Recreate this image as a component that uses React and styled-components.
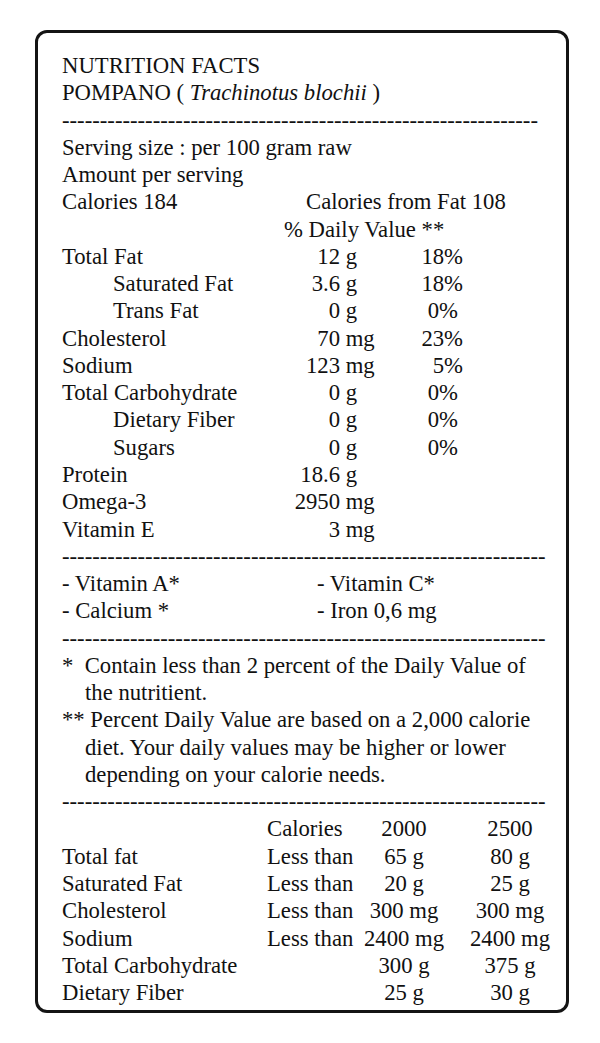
import React from "react"
import styled, { createGlobalStyle } from "styled-components"

const GlobalStyle = createGlobalStyle`
  html, body {
    margin: 0;
    padding: 0;
    background: #fff;
  }
  body {
    font-family: "Liberation Serif", "Times New Roman", serif;
    color: #111;
  }
`

const nutrients = [
  { label: "Total Fat", num: "12", unit: "g", pct: "18%" },
  { label: "Saturated Fat", num: "3.6", unit: "g", pct: "18%", sub: true },
  { label: "Trans Fat", num: "0", unit: "g", pct: "0%", sub: true },
  { label: "Cholesterol", num: "70", unit: "mg", pct: "23%" },
  { label: "Sodium", num: "123", unit: "mg", pct: "5%" },
  { label: "Total Carbohydrate", num: "0", unit: "g", pct: "0%" },
  { label: "Dietary Fiber", num: "0", unit: "g", pct: "0%", sub: true },
  { label: "Sugars", num: "0", unit: "g", pct: "0%", sub: true },
  { label: "Protein", num: "18.6", unit: "g" },
  { label: "Omega-3", num: "2950", unit: "mg" },
  { label: "Vitamin E", num: "3", unit: "mg" },
]

const reference = [
  { label: "Total fat", note: "Less than", a: "65 g", b: "80 g" },
  { label: "Saturated Fat", note: "Less than", a: "20 g", b: "25 g" },
  { label: "Cholesterol", note: "Less than", a: "300 mg", b: "300 mg" },
  { label: "Sodium", note: "Less than", a: "2400 mg", b: "2400 mg" },
  { label: "Total Carbohydrate", a: "300 g", b: "375 g" },
  { label: "Dietary Fiber", a: "25 g", b: "30 g" },
]

function Dashes({ count }) {
  return <DashLine>{"-".repeat(count)}</DashLine>
}

export default function App() {
  return (
    <>
      <GlobalStyle />
      <Label>
        {/* heading */}
        <Line>NUTRITION FACTS</Line>
        <Line>
          POMPANO ( <em>Trachinotus blochii</em> )
        </Line>
        <Dashes count={63} />

        {/* serving */}
        <Line>Serving size : per 100 gram raw</Line>
        <Line>Amount per serving</Line>
        <SplitRow $left={244}>
          <span>Calories 184</span>
          <span>Calories from Fat 108</span>
        </SplitRow>
        <Line $indent={222}>% Daily Value **</Line>

        {/* nutrients */}
        {nutrients.map((n) => (
          <NutrientRow key={n.label}>
            <NutrientName $sub={n.sub}>{n.label}</NutrientName>
            <Amount>{n.num}</Amount>
            <Unit>{n.unit}</Unit>
            <Percent $zero={n.pct === "0%"}>{n.pct}</Percent>
          </NutrientRow>
        ))}
        <Dashes count={64} />

        {/* vitamins */}
        <SplitRow $left={255}>
          <span>- Vitamin A*</span>
          <span>- Vitamin C*</span>
        </SplitRow>
        <SplitRow $left={255}>
          <span>- Calcium *</span>
          <span>- Iron 0,6 mg</span>
        </SplitRow>
        <Dashes count={64} />

        {/* footnotes */}
        <Note>
          *{"\u00a0\u00a0"}Contain less than 2 percent of the Daily Value of
          <br />
          the nutritient.
        </Note>
        <Note>
          ** Percent Daily Value are based on a 2,000 calorie
          <br />
          diet. Your daily values may be higher or lower
          <br />
          depending on your calorie needs.
        </Note>
        <Dashes count={64} />

        {/* reference values */}
        <RefRow>
          <span />
          <span>Calories</span>
          <RefValue>2000</RefValue>
          <RefValue>2500</RefValue>
        </RefRow>
        {reference.map((r) => (
          <RefRow key={r.label}>
            <span>{r.label}</span>
            <span>{r.note}</span>
            <RefValue>{r.a}</RefValue>
            <RefValue>{r.b}</RefValue>
          </RefRow>
        ))}
      </Label>
    </>
  )
}

const Label = styled.section`
  box-sizing: border-box;
  width: 534px;
  height: 983px;
  margin: 30px 0 0 35px;
  padding: 19px 0 0 24px;
  border: 3px solid #141414;
  border-radius: 12px;
  font-family: "Liberation Serif", "Times New Roman", serif;
  font-size: 22.7px;
  line-height: 27.26px;
  color: #111;
  white-space: nowrap;
  em {
    font-style: italic;
  }
`

const Line = styled.div`
  padding-left: ${(p) => p.$indent || 0}px;
`

const DashLine = styled.div`
  overflow: hidden;
`

const SplitRow = styled.div`
  display: grid;
  grid-template-columns: ${(p) => p.$left}px 1fr;
`

const NutrientRow = styled.div`
  display: grid;
  grid-template-columns: 220px 58px 63px 80px;
`

const NutrientName = styled.span`
  padding-left: ${(p) => (p.$sub ? 51 : 0)}px;
`

const Amount = styled.span`
  text-align: right;
`

const Unit = styled.span`
  padding-left: 5.7px;
`

const Percent = styled.span`
  text-align: right;
  padding-right: ${(p) => (p.$zero ? 25 : 20)}px;
`

const Note = styled.div`
  padding-left: 23px;
  text-indent: -23px;
`

const RefRow = styled.div`
  display: grid;
  grid-template-columns: 205px 85px 104px 108px;
`

const RefValue = styled.span`
  text-align: center;
`
